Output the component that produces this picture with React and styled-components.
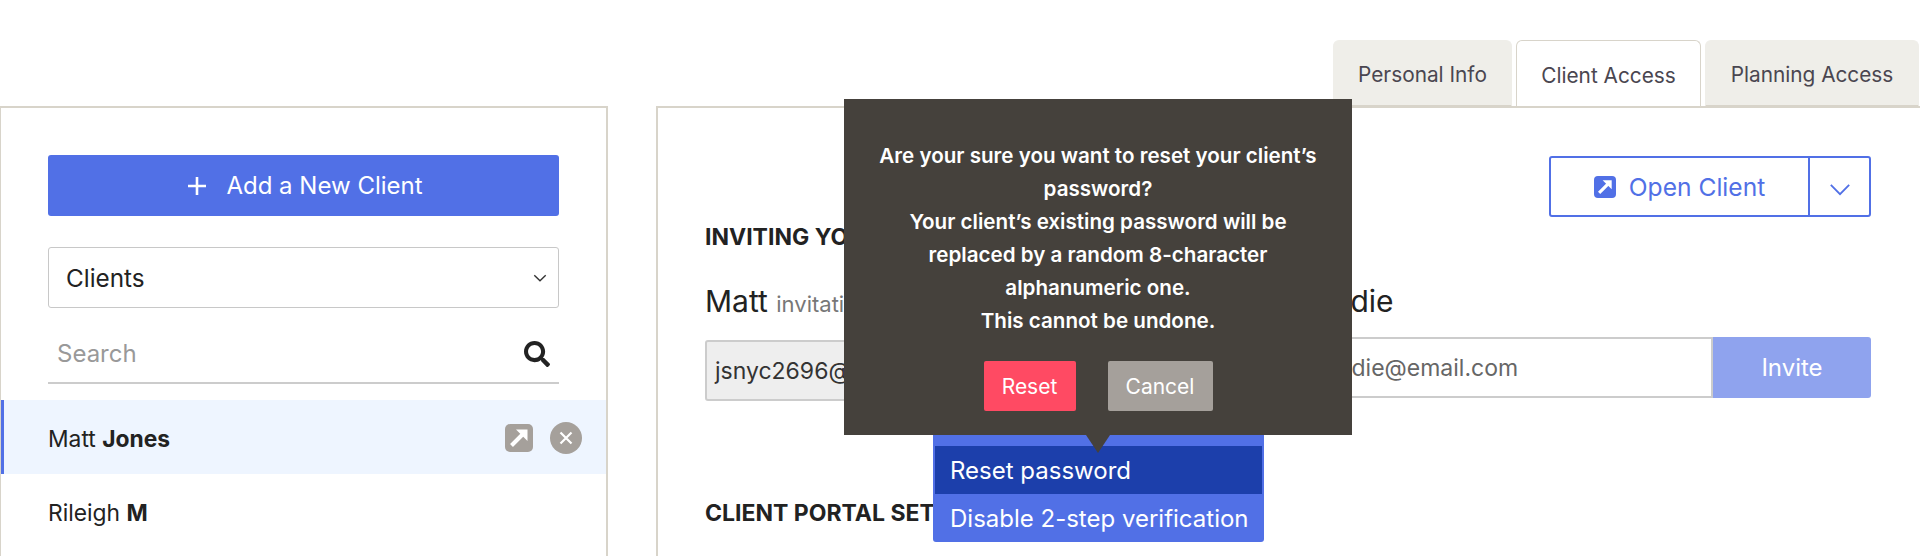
import React from 'react';
import styled, { createGlobalStyle } from 'styled-components';
import { FaSearch } from 'react-icons/fa';

const GlobalStyle = createGlobalStyle`
  html, body {
    margin: 0;
    padding: 0;
    height: 557px;
    overflow: hidden;
    background: #fff;
    font-family: Inter, "Liberation Sans", sans-serif;
    color: #222;
  }
  * { box-sizing: border-box; }
`;

const Page = styled.div`
  width: 1920px;
  height: 557px;
  overflow: hidden;
`;

const TabBar = styled.div`
  display: flex;
  justify-content: flex-end;
  align-items: flex-end;
  gap: 4px;
  height: 107px;
  padding: 40px 1px 0 0;
`;

const Tab = styled.div`
  height: ${(props) => (props.active ? '68px' : '67px')};
  width: ${(props) => props.width}px;
  display: flex;
  align-items: center;
  justify-content: center;
  padding-top: 3px;
  border-radius: 6px 6px 0 0;
  font-size: 20.8px;
  color: #4a4650;
  background: ${(props) => (props.active ? '#fff' : '#efeee9')};
  border: 1px solid ${(props) => (props.active ? '#d8d4ca' : '#efeee9')};
  border-bottom: ${(props) => (props.active ? '1px solid #fff' : '2px solid #d8d4ca')};
  margin-bottom: ${(props) => (props.active ? '-1px' : '0')};
  position: relative;
`;

const Columns = styled.div`
  display: flex;
  gap: 48px;
`;

const Sidebar = styled.aside`
  width: 608px;
  height: 450px;
  border: 2px solid #d8d4ca;
  border-left-width: 1px;
  border-bottom: none;
  padding-top: 47px;
  margin-top: -1px;
`;

const SideControls = styled.div`
  padding: 0 47px 0 47px;
  display: flex;
  flex-direction: column;
`;

const AddButton = styled.button`
  height: 61px;
  display: flex;
  align-items: center;
  justify-content: center;
  gap: 20px;
  padding: 0 0 0 4px;
  border: none;
  border-radius: 3px;
  background: #5170e6;
  color: #fff;
  font: inherit;
  font-size: 24px;
`;

const SelectBox = styled.div`
  margin-top: 31px;
  height: 61px;
  display: flex;
  align-items: center;
  justify-content: space-between;
  padding: 1px 11px 0 17px;
  border: 1px solid #c8c8c8;
  border-radius: 3px;
  font-size: 24.3px;
  color: #222;
`;

const SearchBox = styled.div`
  margin-top: 15px;
  height: 61px;
  display: flex;
  align-items: center;
  justify-content: space-between;
  padding: 2px 9px 0 9px;
  border-bottom: 2px solid #ccc;
  font-size: 24px;
  color: #999;
`;

const ClientRow = styled.div`
  height: 74px;
  display: flex;
  align-items: center;
  justify-content: space-between;
  padding: 2px 24px 0 ${(props) => (props.active ? '44px' : '47px')};
  font-size: 22.8px;
  color: #222;
  background: ${(props) => (props.active ? '#eef5ff' : 'transparent')};
  border-left: ${(props) => (props.active ? '3px solid #5170e6' : 'none')};
  margin-top: ${(props) => props.gap || 0}px;

  b { font-weight: 700; }
`;

const RowActions = styled.div`
  display: flex;
  align-items: center;
  gap: 17px;
`;

const Main = styled.main`
  position: relative;
  flex: 1;
  height: 450px;
  border: 2px solid #d8d4ca;
  border-right: none;
  border-bottom: none;
  padding: 48px 49px 0 47px;
  margin-top: -1px;
`;

const ActionBar = styled.div`
  display: flex;
  justify-content: flex-end;
`;

const SplitButton = styled.div`
  display: flex;
  height: 61px;
  width: 322px;
  border: 2px solid #5170e6;
  border-radius: 3px;
  color: #5170e6;
  font-size: 24.6px;
`;

const SplitMain = styled.div`
  flex: 1;
  display: flex;
  align-items: center;
  justify-content: center;
  gap: 13px;
  border-right: 2px solid #5170e6;
`;

const SplitCaret = styled.div`
  width: 59px;
  display: flex;
  align-items: center;
  justify-content: center;
  padding-top: 6px;
`;

const SectionTitle = styled.h3`
  margin: ${(props) => props.top}px 0 0;
  font-size: 23px;
  font-weight: 700;
  line-height: 28px;
  color: #222;
`;

const InviteGrid = styled.div`
  display: grid;
  grid-template-columns: 570px 1fr;
  column-gap: 39px;
  margin-top: 32px;
`;

const PersonName = styled.div`
  font-size: 30px;
  line-height: 36px;
  color: #222;

  small {
    font-size: 22px;
    color: #777;
  }
`;

const InviteRow = styled.div`
  display: flex;
  margin-top: 18px;
  height: 61px;
`;

const EmailField = styled.div`
  flex: 1;
  display: flex;
  align-items: center;
  padding: 0 8px;
  font-size: 23px;
  white-space: nowrap;
  overflow: hidden;
  border: 2px solid #ccc;
  border-radius: 3px 0 0 3px;
  background: ${(props) => (props.disabled ? '#eeeeee' : '#fff')};
  color: ${(props) => (props.disabled ? '#333' : '#666')};
`;

const InviteButton = styled.div`
  width: 158px;
  display: flex;
  align-items: center;
  justify-content: center;
  font-size: 24px;
  color: #fff;
  background: #8fa3ee;
  border-radius: 0 3px 3px 0;
`;

const DropMenu = styled.div`
  position: absolute;
  left: 275px;
  top: 299px;
  width: 331px;
  padding: 39px 2px 0;
  background: #5170e6;
  border-radius: 0 0 3px 3px;
  color: #fff;
  font-size: 24px;
`;

const DropItem = styled.div`
  height: 48px;
  display: flex;
  align-items: center;
  padding: 0 15px;
  white-space: nowrap;
  background: ${(props) => (props.active ? '#1c3fab' : 'transparent')};
`;

const Tooltip = styled.div`
  position: absolute;
  left: 186px;
  top: -9px;
  width: 508px;
  height: 336px;
  background: #45413c;
  padding-top: 40px;
  color: #fff;
  text-align: center;
  font-size: 20.6px;
  font-weight: 600;
  line-height: 33px;

  &::after {
    content: '';
    position: absolute;
    left: 242px;
    top: 100%;
    border-left: 12px solid transparent;
    border-right: 12px solid transparent;
    border-top: 18px solid #45413c;
  }
`;

const TooltipText = styled.div`
  width: 448px;
  margin: 0 auto;
`;

const TooltipActions = styled.div`
  display: flex;
  justify-content: center;
  gap: 32px;
  margin-top: 24px;
`;

const TipButton = styled.div`
  height: 50px;
  width: ${(props) => props.width}px;
  display: flex;
  align-items: center;
  justify-content: center;
  font-size: 21px;
  font-weight: 400;
  border-radius: 2px;
  background: ${(props) => props.bg};
`;

const OpenIcon = ({ size, fill, arrow }) => (
  <svg width={size} height={size} viewBox="0 0 28 28">
    <rect width="28" height="28" rx="5" fill={fill} />
    <path d="M6.5 21.5 L18 10" stroke={arrow} strokeWidth="4" fill="none" />
    <path d="M11 5.5 H22.5 V17 Z" fill={arrow} />
  </svg>
);

const ClearIcon = () => (
  <svg width="32" height="32" viewBox="0 0 32 32">
    <circle cx="16" cy="16" r="16" fill="#a5a09b" />
    <path d="M10.5 10.5 L21.5 21.5 M21.5 10.5 L10.5 21.5" stroke="#fff" strokeWidth="2.2" />
  </svg>
);

const PlusIcon = () => (
  <svg width="18" height="18" viewBox="0 0 18 18">
    <path d="M9 0 V18 M0 9 H18" stroke="#fff" strokeWidth="2.6" />
  </svg>
);

const Chevron = ({ width, height, color, weight }) => (
  <svg width={width} height={height} viewBox="0 0 24 14">
    <path d="M2 2 L12 12 L22 2" stroke={color} strokeWidth={weight} fill="none" />
  </svg>
);

export default function App() {
  return (
    <Page>
      <GlobalStyle />
      <TabBar>
        <Tab width={179}>Personal Info</Tab>
        <Tab width={185} active>Client Access</Tab>
        <Tab width={214}>Planning Access</Tab>
      </TabBar>
      <Columns>
        <Sidebar>
          <SideControls>
            <AddButton>
              <PlusIcon />
              Add a New Client
            </AddButton>
            <SelectBox>
              Clients
              <Chevron width={14} height={8} color="#333" weight={2.4} />
            </SelectBox>
            <SearchBox>
              Search
              <FaSearch size={26} color="#222" />
            </SearchBox>
          </SideControls>
          <ClientRow active gap={16}>
            <span>Matt <b>Jones</b></span>
            <RowActions>
              <OpenIcon size={28} fill="#a5a09b" arrow="#fff" />
              <ClearIcon />
            </RowActions>
          </ClientRow>
          <ClientRow>
            <span>Rileigh <b>M</b></span>
          </ClientRow>
        </Sidebar>
        <Main>
          <ActionBar>
            <SplitButton>
              <SplitMain>
                <OpenIcon size={22} fill="#5170e6" arrow="#fff" />
                Open Client
              </SplitMain>
              <SplitCaret>
                <Chevron width={22} height={13} color="#5170e6" weight={2} />
              </SplitCaret>
            </SplitButton>
          </ActionBar>
          <SectionTitle top={6}>INVITING YOUR CLIENTS</SectionTitle>
          <InviteGrid>
            <div>
              <PersonName>Matt <small>invitation sent</small></PersonName>
              <InviteRow>
                <EmailField disabled>jsnyc2696@email.com</EmailField>
              </InviteRow>
            </div>
            <div>
              <PersonName>Eddie</PersonName>
              <InviteRow>
                <EmailField>eddie@email.com</EmailField>
                <InviteButton>Invite</InviteButton>
              </InviteRow>
            </div>
          </InviteGrid>
          <SectionTitle top={98}>CLIENT PORTAL SETTINGS</SectionTitle>
          <DropMenu>
            <DropItem active>Reset password</DropItem>
            <DropItem>Disable 2-step verification</DropItem>
          </DropMenu>
          <Tooltip>
            <TooltipText>
              Are your sure you want to reset your client’s password?
              <br />
              Your client’s existing password will be replaced by a random 8-character alphanumeric one.
              <br />
              This cannot be undone.
            </TooltipText>
            <TooltipActions>
              <TipButton width={92} bg="#ff4a63">Reset</TipButton>
              <TipButton width={105} bg="#a5a09b">Cancel</TipButton>
            </TooltipActions>
          </Tooltip>
        </Main>
      </Columns>
    </Page>
  );
}
